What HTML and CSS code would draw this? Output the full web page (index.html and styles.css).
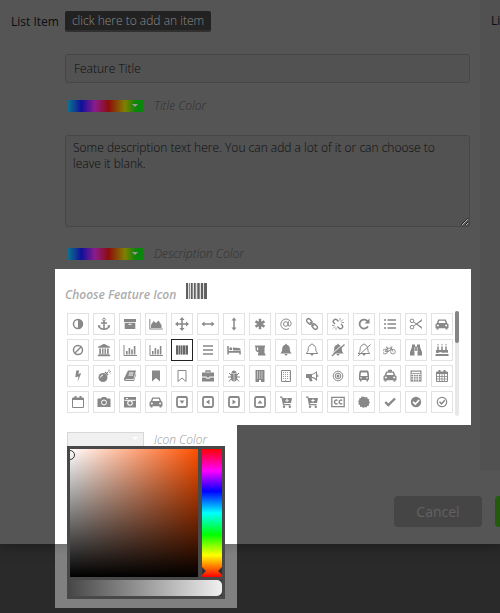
FILE: index.html
```html
<!DOCTYPE html>
<html lang="en">
<head>
<meta charset="utf-8">
<title>Feature list editor</title>
<link rel="stylesheet" href="styles.css">
</head>
<body>
<main class="dialog">
  <div class="columns">
    <section class="item">
      <div class="item-head">
        <span class="item-label">List Item</span>
        <button class="add" type="button">click here to add an item</button>
      </div>
      <div class="fields">
        <input class="box title" type="text" value="Feature Title" aria-label="Feature title">
        <div class="color-row">
          <button class="swatch" id="title-color" type="button" aria-label="Pick title color"></button>
          <label class="hint" for="title-color">Title Color</label>
        </div>
        <textarea class="box description" aria-label="Description">Some description text here. You can add a lot of it or can choose to leave it blank.</textarea>
        <div class="color-row">
          <button class="swatch" id="description-color" type="button" aria-label="Pick description color"></button>
          <label class="hint" for="description-color">Description Color</label>
        </div>
      </div>
      <div class="chooser">
        <div class="chooser-head">
          <span class="chooser-title">Choose Feature Icon</span>
          <svg class="preview" viewBox="0 0 21 16" aria-hidden="true"><path class="tone" d="M0 0h21v16H0z"/><path d="M0 0h2v16H0zM5 0h1v16H5zM8 0h1v16H8zM12 0h1v16h-1zM15 0h2v16h-2zM18 0h3v16h-3z"/><path class="gap" d="M2 0h1v16H2zM4 0h1v16H4zM7 0h1v16H7zM10 0h1v16h-1zM14 0h1v16h-1zM17 0h1v16h-1z"/></svg>
        </div>
        <div class="chooser-body">
          <div class="icons" id="icons"></div>
          <div class="scroll"><div class="thumb"></div></div>
        </div>
      </div>
      <div class="icon-color">
        <div class="icon-color-row">
          <button class="swatch plain" id="icon-color" type="button" aria-label="Pick icon color"></button>
          <label class="hint" for="icon-color">Icon Color</label>
        </div>
        <div class="picker">
          <div class="shade"><span class="ring"></span></div>
          <div class="hue"><span class="notch left"></span><span class="notch right"></span></div>
          <div class="alpha"><span></span></div>
        </div>
      </div>
    </section>
    <section class="next"><span class="item-label">List Item</span></section>
  </div>
  <footer class="actions">
    <button class="cancel" type="button">Cancel</button>
    <button class="save" type="button" aria-label="Save"></button>
  </footer>
</main>
<script src="icons.js"></script>
</body>
</html>
```
FILE: styles.css
```css
* { box-sizing: border-box; }

body {
  margin: 0;
  min-height: 100vh;
  overflow-x: hidden;
  background: #2a2a2a;
  font: 300 12px/16px "Open Sans", sans-serif;
  color: #0c0c0c;
}

button, input, textarea { font: inherit; color: inherit; margin: 0; }
button { padding: 0; border: 0; }

.dialog {
  background: #555;
  box-shadow: 0 2px 12px #1c1c1c;
}

.columns {
  display: grid;
  grid-template-columns: 1fr 20px;
  min-height: 470px;
}

.item { padding-top: 11px; min-width: 0; }

.item-head {
  display: flex;
  align-items: center;
  gap: 6px;
  padding-left: 11px;
}

.item-label { white-space: nowrap; font-weight: 400; }

.add {
  height: 21px;
  padding: 0 7px;
  border-bottom: 2px solid #303030;
  border-radius: 2px;
  background: #222;
  color: #8c8c8c;
}

.fields {
  display: flex;
  flex-direction: column;
  padding: 22px 10px 6px 65px;
}

.box {
  width: 100%;
  border: 1px solid #464646;
  border-radius: 3px;
  background: #525252;
  outline: 0;
}

.title { height: 29px; padding: 0 8px; }

.description {
  display: block;
  height: 92px;
  padding: 4px 7px;
  resize: vertical;
}

.color-row {
  display: flex;
  align-items: center;
  gap: 11px;
  height: 18px;
  margin: 14px 0 20px 3px;
}

.description + .color-row { margin: 18px 0 0 3px; }

.swatch {
  position: relative;
  width: 75px;
  height: 12px;
  background: linear-gradient(90deg, #0c7290, #10109a 18%, #8c1c8c 36%, #8c0c0c 54%, #808000 76%, #0a860a 90%);
}

.swatch::after {
  content: "";
  position: absolute;
  right: 5px;
  top: 4px;
  border: 3px solid transparent;
  border-top-color: #999;
  border-bottom: 0;
}

.hint { font-style: italic; color: #303030; }

.chooser {
  margin: 0 9px 0 55px;
  padding: 14px 10px 9px;
  background: #fff;
}

.chooser-head {
  display: flex;
  gap: 10px;
  height: 28px;
}

.chooser-title {
  padding-top: 4px;
  font-weight: 600;
  font-style: italic;
  color: #acacac;
}

.preview { width: 21px; height: 16px; fill: #606060; }
.preview .tone { fill: #8c8c8c; }
.preview .gap { fill: #e0e0e0; }

.chooser-body { display: flex; justify-content: space-between; }

.icons {
  display: grid;
  grid-template-columns: repeat(15, 22px);
  align-content: start;
  gap: 4px;
  padding: 2px 0 0 2px;
}

.icon {
  display: grid;
  place-items: center;
  width: 22px;
  height: 22px;
  border: 1px solid #e2e2e2;
  background: #fff;
  color: #888;
}

.icon.selected { border-color: #222; color: #666; }
.icon svg { width: 14px; height: 14px; fill: currentColor; }
.icon .l { fill: none; stroke: currentColor; }
.icon .w { fill: #fff; }
.icon .x { fill: none; stroke: #fff; }
.icon .tone { fill: #aaa; }

.scroll {
  width: 4px;
  height: 105px;
  margin-right: 2px;
  border-radius: 2px;
  background: #e8e8e8;
}

.thumb { height: 32px; border-radius: 2px; background: #858585; }

.icon-color {
  position: relative;
  width: 182px;
  height: 45px;
  margin-left: 55px;
  padding: 7px 0 0 12px;
}

/* Lit area behind the picker, reaching past the dialog edge */
.icon-color::before {
  content: "";
  position: absolute;
  left: 0;
  top: 0;
  width: 100%;
  height: 183px;
  background: linear-gradient(#fff 119px, #747474 119px, #808080 130px);
}

.icon-color-row {
  position: relative;
  display: flex;
  gap: 10px;
}

.plain { width: 77px; height: 15px; border: 1px solid #d8d8d8; background: #f0f0f0; }
.plain::after { border-top-color: #fff; }
.icon-color .hint { color: #999; }

.picker {
  position: absolute;
  top: 21px;
  left: 12px;
  display: grid;
  grid-template-columns: 128px 20px;
  grid-template-rows: 128px 16px;
  gap: 3px 4px;
  padding: 3px;
  background: #484848;
}

.shade {
  position: relative;
  overflow: hidden;
  background: linear-gradient(transparent, #000), linear-gradient(90deg, #fff, #ff5000);
}

.ring {
  position: absolute;
  left: -5px;
  top: 1px;
  width: 10px;
  height: 10px;
  border: 1px solid #333;
  border-radius: 50%;
}

.hue {
  position: relative;
  background: linear-gradient(#f00, #f0f 17%, #00f 33%, #0ff 50%, #0f0 67%, #ff0 83%, #f00);
}

.notch {
  position: absolute;
  bottom: 2px;
  border: 4px solid transparent;
}
.notch.left { left: 0; border-left-color: #333; border-right: 0; }
.notch.right { right: 0; border-right-color: #333; border-left: 0; }

.alpha {
  grid-column: span 2;
  background: #333;
}
.alpha span {
  display: block;
  height: 16px;
  border-radius: 0 5px 5px 0;
  background: linear-gradient(90deg, #484848, #f0f0f0);
}

.next { padding: 13px 0 0 11px; overflow: hidden; background: #515151; }

.actions {
  display: flex;
  justify-content: flex-end;
  gap: 13px;
  padding: 26px 0 17px;
  overflow: hidden;
}

.cancel {
  width: 88px;
  height: 31px;
  border-radius: 4px;
  background: #454545;
  color: #626262;
  font-size: 14px;
  font-weight: 400;
}

.save { width: 88px; height: 31px; margin-right: -83px; border-radius: 4px; background: #245a0c; }
```
FILE: icons.js
```javascript
const chart = '<path class="l" d="M1 2v10.5h13"/><path d="M3 8h1.6v3.5H3zM5.6 5h1.6v6.500H5.600zM8.200 6.500h1.600v5H8.200zM10.800 3h1.600v8.500h-1.600z"/>';
const car = '<path d="M3.200 2.500h7.600l1.500 3.700 1.200 1v4h-1v1.200h-2v-1.200h-7v1.200h-2v-1.200h-1v-4l1.200-1z"/><path class="w" d="M4.200 3.700h5.600l.8 2.300H3.400zM1.900 7.700h1.900v1.500H1.900zM10.200 7.700h1.900v1.500h-1.900z"/>';
const bell = 'M7 .8c.6 0 .8.5.8 1 2 .5 3 2 3 4 0 2.500.8 3.700 2 4.700H1.200c1.200-1 2-2.200 2-4.700 0-2 1-3.500 3-4 0-.5.2-1 .8-1z';
const clapper = '<path d="M5.500 11h3a1.500 1.500 0 0 1-3 0z"/>';
const square = '<rect class="l" x="2" y="2" width="10" height="10" rx="1.500" stroke-width="1.800"/>';
const cart = '<path d="M1 1.500h2.200l.5 1.500H13l-1 5H5l.2 1h6.300v1.200H4L2.500 2.700H1z"/><circle cx="5" cy="11.800" r="1.200"/><circle cx="10.800" cy="11.800" r="1.200"/>';
const mark = 'M3 1.500h8v11L7 9l-4 3.500z';
const calendar = '<path class="l" d="M1.500 3h11v9.500h-11z"/><path d="M1.500 3h11v2h-11zM3.500 1h2v3h-2zM8.500 1h2v3h-2z"/>';

const icons = [
  ['adjust', '<circle class="l" cx="7" cy="7" r="4.500" stroke-width="1.500"/><path d="M7 2.500a4.500 4.500 0 0 1 0 9z"/>'],
  ['anchor', '<circle class="l" cx="7" cy="2.500" r="1.300"/><path class="l" stroke-width="1.500" d="M7 3.800v8M4 6h6M1.800 9c.7 2 2.500 3.200 5.200 3.200s4.500-1.200 5.200-3.200"/><path d="M1 8l3 .8-2.500 2zM13 8l-3 .8 2.500 2z"/>'],
  ['archive', '<path d="M1 2h12v3H1zM1.700 5.700h10.600V12H1.700z"/><path class="x" d="M5.500 7.300h3"/>'],
  ['area chart', '<path class="l" d="M.8 2v10h13"/><path d="M2 11V8l2.500-4L7 6l2.500-2.500L12.500 8v3z"/>'],
  ['arrows', '<path class="l" stroke-width="1.500" d="M7 2v10M2 7h10"/><path d="M7 0l2.500 3h-5zM7 14l2.500-3h-5zM0 7l3-2.500v5zM14 7l-3-2.500v5z"/>'],
  ['arrows horizontal', '<path class="l" stroke-width="1.500" d="M2 7h10"/><path d="M.5 7l3-2.500v5zM13.500 7l-3-2.500v5z"/>'],
  ['arrows vertical', '<path class="l" stroke-width="1.500" d="M7 2v10"/><path d="M7 .5l2.500 3h-5zM7 13.500l2.500-3h-5z"/>'],
  ['asterisk', '<path class="l" stroke-width="2.500" d="M7 1.800v10.400M2.500 4.400l9 5.200M2.500 9.600l9-5.200"/>'],
  ['at', '<circle class="l" cx="6.800" cy="7" r="2.300"/><path class="l" d="M9.500 4.300L9 8c0 1.700 3.200 1.500 3.200-1.500A5.200 5.200 0 1 0 10 11.500"/>'],
  ['link', '<g class="l" stroke-width="1.400"><rect x="1.300" y="2.500" width="6" height="3.800" rx="1.900" transform="rotate(45 4.300 4.400)"/><rect x="6.700" y="7.700" width="6" height="3.800" rx="1.900" transform="rotate(45 9.700 9.600)"/><path d="M5 5l4 4"/></g>'],
  ['unlink', '<g class="l" stroke-width="1.400"><path d="M7.500 4.500L5.800 2.800C4 1 1 4 2.800 5.800L4 7M6.500 9.500l1.700 1.700c1.800 1.800 4.800-1.200 3-3L10 7"/></g><path class="l" stroke-width=".8" d="M9 3.500V1M10 4.500l2-2M10.500 5.500H13M5 10.500V13M4 9.500l-2 2M3.500 8.500H1"/>'],
  ['rotate right', '<path class="l" stroke-width="1.800" d="M10.800 4.500A4.500 4.500 0 1 0 11 9.300"/><path d="M12.500 1.500v5h-5z"/>'],
  ['list', '<path class="l" stroke-width="1.600" d="M1 3h2M1 7h2M1 11h2M4.500 3H13M4.500 7H13M4.500 11H13"/>'],
  ['cut', '<g class="l"><circle cx="3" cy="3.800" r="1.800"/><circle cx="3" cy="10.200" r="1.800"/><path d="M4.500 5L13 10.500M4.500 9L13 3.500M7.500 7l5.500-4.500M7.500 7l5.500 4.500"/></g>'],
  ['automobile', car],
  ['ban', '<g class="l" stroke-width="1.500"><circle cx="7" cy="7" r="4.500"/><path d="M10 4l-6 6"/></g>'],
  ['bank', '<path d="M7 .8l6 3v1H1v-1zM2.300 5.500h1.700v5H2.300zM5 5.500h1.500v5H5zM7.500 5.500H9v5H7.500zM10 5.500h1.700v5H10zM1.500 10.700h11v1h-11zM.8 12h12.400v1.200H.8z"/>'],
  ['bar chart', chart],
  ['bar graph', chart],
  ['barcode', '<path class="tone" d="M1 2.500h12v9H1z"/><path d="M1 2.500h2v9H1zM4 2.500h1v9H4zM6 2.500h1v9H6zM8 2.500h2v9H8zM11 2.500h2v9h-2z"/>'],
  ['bars', '<path class="l" stroke-width="1.600" d="M2 3h10M2 7h10M2 11h10"/>'],
  ['bed', '<path d="M.3 3h1.500v5h12v3.500h-1.500V9.700H1.800v1.800H.3zM6 4.500l6 .5c1 .2 1.700 1 1.700 2.500H6z"/><circle cx="3.800" cy="5.800" r="1.500"/>'],
  ['beer', '<path d="M2 2.500h10V4l-.5.500V10l1 1.500v1H5V11l.5-2H4L2.500 7V4L2 3.500z"/><path class="w" d="M4 4.500h1.200v2.700h-.9L4 6.800z"/>'],
  ['bell', `<path d="${bell}"/>${clapper}`],
  ['bell outline', `<path class="l" d="${bell}"/>${clapper}`],
  ['bell slash', `<path d="${bell}"/>${clapper}<path class="x" d="M0 12L13 0"/><path class="l" stroke-width="1.300" d="M1 13L13.500 1.500"/>`],
  ['bell slash outline', `<path class="l" d="${bell}"/>${clapper}<path class="l" d="M1 13L13.500 1.500"/>`],
  ['bicycle', '<svg x="-1" width="16" height="14" viewBox="0 0 16 14"><g class="l"><circle cx="3.500" cy="8.800" r="2.700"/><circle cx="12.500" cy="8.800" r="2.700"/><path d="M3.500 8.800L6 5h5L7.500 8.800h-4M7.500 8.800L5.500 4M4.500 3.800h2M12.500 8.800L10 3.500h2"/></g></svg>'],
  ['binoculars', '<path d="M3 1.500h3v2h2v-2h3V4l2 5v3.500H8.500V8h-3v4.500H1V9l2-5z"/><path class="x" stroke-width=".6" d="M5.800 4v5M8.200 4v5"/>'],
  ['birthday cake', '<path class="l" stroke-width="1.500" d="M3 3.500v4M7 3.500v4M11 3.500v4"/><path d="M3 .5l.8 1.700H2.200zM7 .5l.8 1.700H6.200zM11 .5l.8 1.700h-1.600zM1 7h12v2.500c-1 1-2-.5-3 0s-2 .5-3 0-2-.5-3 0-2 1-3 0zM.5 11h13v2H.5z"/>'],
  ['bolt', '<path d="M5.300 1.500h3L7.200 4.800l3-.6L6.500 13l1-5.500-3.200.8z"/>'],
  ['bomb', '<circle cx="6" cy="8.500" r="4.500"/><path d="M7.500 3.500l3 3 1-1-3-3z"/><path class="l" d="M10 4l1.500-1.500M12 .5v1.500M13.800 2.500h-1M13.500 4.500l-1-1"/><path class="x" d="M3.500 8.500A3 3 0 0 1 6 6"/>'],
  ['book', '<path d="M5 1.500h8L10.500 10H2.800c-.5 0-.5.700 0 .7h8l2-6.200.5.500-2.300 7H3c-2 0-2.500-1-2-2.500z"/><path class="x" d="M6 4h4.500M5.500 6H10"/>'],
  ['bookmark', `<path d="${mark}"/>`],
  ['bookmark outline', `<path class="l" d="${mark}"/>`],
  ['briefcase', '<path class="l" stroke-width="1.300" d="M5 3.500V2h4v1.500"/><path d="M1 3.500h12v9H1z"/><path class="x" d="M1 8h4.500v1.200h3V8H13"/>'],
  ['bug', '<path d="M4.500 4a2.500 2.500 0 0 1 5 0zM3.800 4.500h6.400V9c0 4.500-6.400 4.500-6.400 0z"/><path class="l" d="M4 6L2 4M10 6l2-2M1 8h12M4 10l-2 2.500M10 10l2 2.500"/><path class="x" stroke-width=".6" d="M7 5v7"/>'],
  ['building', '<path d="M2.500 1h9v12h-9z"/><path class="x" stroke-dasharray="1 1.200" d="M4 3h6.500M4 5h6.500M4 7h6.500M4 9h6.500"/><path class="w" d="M6 11h2v2H6z"/>'],
  ['building outline', '<path class="l" d="M2.500 1.500h9v11h-9z"/><path class="l" stroke-width=".8" stroke-dasharray="1 1" d="M4 3.500h6.500M4 5.500h6.500M4 7.500h6.500M4 9.500h6.500M6.500 11v2"/>'],
  ['bullhorn', '<path d="M1 5h5c2.500 0 4.500-1.500 6-3v10c-1.500-1.500-3-3-5.500-3l1 3-2.500.5L3.500 9H1zM12.300 5.500h1v2.500h-1z"/><path class="w" d="M7 5.800c1.500-.2 3-.9 4-1.700v5.500C10 8.700 8.500 8 7 8z"/>'],
  ['bullseye', '<g class="l"><circle cx="7" cy="7" r="4.800"/><circle cx="7" cy="7" r="2.800"/></g><circle cx="7" cy="7" r="1.500"/>'],
  ['bus', '<path d="M3.500 1.500h7c1 0 1.500 3 1.500 5V11h-1v1.500H9.500V11h-5v1.500H3V11H2V6.500c0-2 .5-5 1.500-5z"/><path class="w" d="M4 3.500h6l.5 3.500h-7zM3.200 8.300h1.500v1.300H3.200zM9.300 8.300h1.500v1.300H9.300z"/>'],
  ['taxi', `${car}<path d="M5 .8h4v2H5z"/>`],
  ['calculator', '<path d="M1.500 1.500h11v11h-11z"/><path class="w" d="M2.700 2.700h8.600v1.600H2.700z"/><path class="x" stroke-width=".8" d="M2 5.500h10M2 7.700h10M2 10h10M4.500 5v7M7 5v7M9.500 5v7"/>'],
  ['calendar', `${calendar}<path class="l" stroke-width=".8" d="M2 7.500h10M2 10h10M4.500 5v7.500M7 5v7.500M9.500 5v7.500"/>`],
  ['calendar outline', calendar],
  ['camera', '<path d="M1.500 3.500H4L5 2h4l1 1.500h2.500c.5 0 1 .5 1 1v7.500H.5V4.500c0-.5.500-1 1-1z"/><circle class="x" cx="7" cy="7.500" r="2.500"/>'],
  ['camera retro', '<path d="M1 2h12v10.500H1z"/><path class="x" d="M1.500 5.300h11M3 3.500h2"/><circle class="w" cx="7" cy="8" r="2.800"/><circle cx="7" cy="8" r="1.800"/>'],
  ['car', car],
  ['caret down', `${square}<path d="M4.500 5.500h5L7 8.800z"/>`],
  ['caret left', `${square}<path d="M8.500 4.500v5L5 7z"/>`],
  ['caret right', `${square}<path d="M5.500 4.500v5L9 7z"/>`],
  ['caret up', `${square}<path d="M4.500 8.500h5L7 5.200z"/>`],
  ['cart arrow down', `${cart}<path class="x" d="M8 3.500v3M6.500 5l1.500 1.500L9.500 5"/>`],
  ['cart plus', `${cart}<path class="x" d="M8 3.800v3.400M6.300 5.500h3.400"/>`],
  ['closed captions', '<path class="l" stroke-width="1.300" d="M.8 2.300h12.400v9.400H.8z"/><path class="l" stroke-width="1.500" d="M6.300 5.800c-.6-1.300-2.800-.8-2.800 1.200s2.200 2.500 2.800 1.200M11 5.800C10.400 4.500 8.200 5 8.200 7s2.200 2.500 2.800 1.200"/>'],
  ['certificate', '<path d="M7 1.500l1.400 1.100 1.700-.5.600 1.700 1.700.6-.5 1.700L13 7.500l-1.100 1.300.2 1.800-1.800.4-.8 1.600-1.700-.5L6.300 13 5 11.800l-1.800.1-.3-1.800-1.600-.8.600-1.700L1 6.200 2.300 5l-.1-1.800 1.800-.3.800-1.600 1.700.6z"/>'],
  ['check', '<path class="l" stroke-width="2.400" d="M2.300 7l3 3L12 3.500"/>'],
  ['check circle', '<circle cx="7" cy="7" r="5.200"/><path class="x" stroke-width="1.700" d="M4 6.800l2.300 2.300L10.200 5"/>'],
  ['check circle outline', '<circle class="l" cx="7" cy="7" r="4.700" stroke-width="1.200"/><path class="l" stroke-width="1.500" d="M4.500 6.800l2 2L9.800 5.300"/>']
];

document.getElementById('icons').innerHTML = icons.map(([name, art]) =>
  `<button type="button" class="icon${name === 'barcode' ? ' selected' : ''}" aria-label="${name}"><svg viewBox="0 0 14 14">${art}</svg></button>`
).join('');
```
